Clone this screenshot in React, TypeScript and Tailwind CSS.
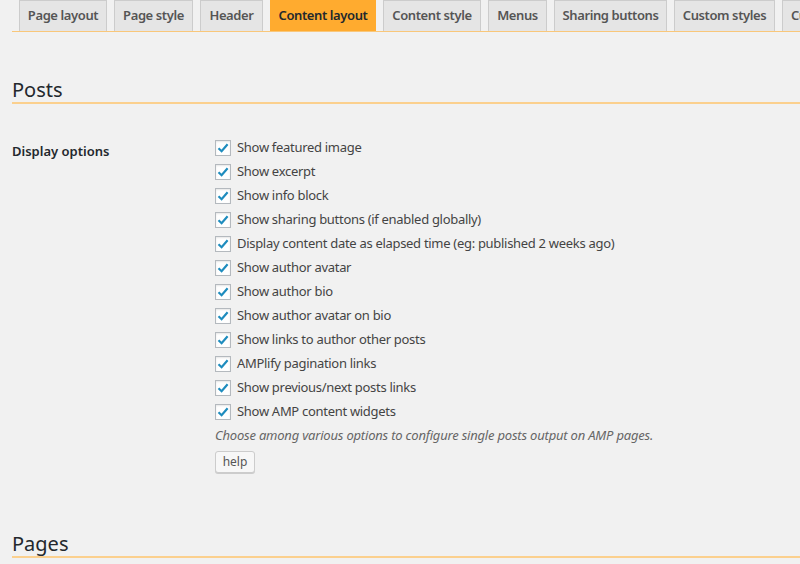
import React from "react";

const TABS: [string, string][] = [
  ["Page layout", "w-[88px]"],
  ["Page style", "w-[79px]"],
  ["Header", "w-[63px]"],
  ["Content layout", "w-[106px]"],
  ["Content style", "w-[98px]"],
  ["Menus", "w-[59px]"],
  ["Sharing buttons", "w-[113px]"],
  ["Custom styles", "w-[101px]"],
  ["Custom code", "w-[96px]"],
];

const OPTIONS = [
  "Show featured image",
  "Show excerpt",
  "Show info block",
  "Show sharing buttons (if enabled globally)",
  "Display content date as elapsed time (eg: published 2 weeks ago)",
  "Show author avatar",
  "Show author bio",
  "Show author avatar on bio",
  "Show links to author other posts",
  "AMPlify pagination links",
  "Show previous/next posts links",
  "Show AMP content widgets",
];

function Check() {
  return (
    <span className="w-4 h-4 shrink-0 bg-white border border-[#b4b9be] shadow-[inset_0_1px_2px_rgba(0,0,0,0.1)] flex items-center justify-center">
      <svg width="14" height="14" viewBox="0 0 14 14">
        <path d="M2.5 7.2 L5.6 10.2 L11.6 3.2" fill="none" stroke="#1e8cbe" strokeWidth="2.2" />
      </svg>
    </span>
  );
}

export default function App() {
  return (
    <div className="w-[800px] h-[564px] overflow-hidden bg-[#f1f1f1] text-[13px] text-[#444] font-['Noto_Sans',sans-serif] pl-3">
      <div className="flex gap-[7px] pl-[7px] border-b border-[#f9c77a] whitespace-nowrap">
        {TABS.map(([t, w]) => {
          const sel = t === "Content layout";
          return (
            <div
              key={t}
              className={
                (sel
                  ? "bg-[#ffab2f] border-[#ffab2f] text-[#23282d] "
                  : "bg-[#e5e5e5] border-[#ccc] text-[#555] ") +
                w +
                " h-[31px] flex items-center justify-center border border-b-0 font-semibold text-[13px] tracking-[-0.4px] shrink-0 overflow-hidden"
              }
            >
              {t}
            </div>
          );
        })}
      </div>

      <h2 className="mt-[46px] text-[20px] leading-[24px] text-[#23282d] border-b-2 border-[#fbd08e]">Posts</h2>

      <div className="flex mt-[32px]">
        <div className="w-[203px] shrink-0 pt-[6px] font-semibold text-[#23282d] text-[13px]">Display options</div>
        <div className="flex flex-col">
          {OPTIONS.map((o) => (
            <div key={o} className="h-6 flex items-center gap-[6px] text-[#444]">
              <Check />
              <span className="tracking-[-0.3px]">{o}</span>
            </div>
          ))}
          <div className="h-6 flex items-center italic text-[#666] tracking-[-0.2px]">
            Choose among various options to configure single posts output on AMP pages.
          </div>
          <button className="mt-[3px] w-[40px] h-[22px] bg-[#f7f7f7] border border-[#ccc] rounded-[3px] shadow-[0_1px_0_#ccc] text-[12px] text-[#555] flex items-center justify-center">
            help
          </button>
        </div>
      </div>

      <h2 className="mt-[59px] text-[20px] leading-[24px] text-[#23282d] border-b-2 border-[#fbd08e]">Pages</h2>
    </div>
  );
}
